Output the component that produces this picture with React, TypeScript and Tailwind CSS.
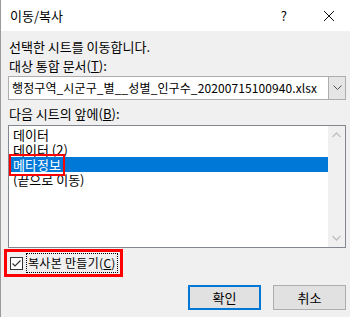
import React from "react";

const font = { fontFamily: "'Noto Sans CJK KR', 'Noto Sans', sans-serif" };

const sheets = ["데이터", "데이터 (2)", "메타정보", "(끝으로 이동)"];

export default function App() {
  return (
    <div
      className="w-[350px] h-[317px] bg-[#f0f0f0] border-l border-[#9a9a9a] text-[13px] text-black overflow-hidden flex flex-col"
      style={font}
    >
      {/* Title bar */}
      <div className="h-[31px] bg-white flex items-center pl-[9px] shrink-0">
        <span className="text-[13px] leading-none">이동/복사</span>
        <span className="ml-auto mr-[36px] text-[13px] leading-none">?</span>
        <svg width="12" height="12" viewBox="0 0 12 12" className="mr-[15px]">
          <path d="M1 1 L11 11 M11 1 L1 11" stroke="#111" strokeWidth="1" />
        </svg>
      </div>

      {/* Body */}
      <div className="flex flex-col px-[7px]">
        <div className="mt-[8px] h-[15px] leading-[15px] pl-[1px]">선택한 시트를 이동합니다.</div>
        <div className="mt-[4px] h-[15px] leading-[15px] pl-[1px]">
          대상 통합 문서(<span className="underline">T</span>):
        </div>

        {/* Combo box */}
        <div className="mt-[3px] h-[24px] w-[338px] flex border border-[#adadad] bg-white">
          <div className="flex-1 flex items-center pl-[3px] text-[12px] tracking-[0.1px]">
            행정구역_시군구_별__성별_인구수_20200715100940.xlsx
          </div>
          <div className="w-[17px] bg-[#e5e5e5] border-l border-[#adadad] flex items-center justify-center">
            <svg width="9" height="6" viewBox="0 0 9 6">
              <path d="M0.5 0.5 L4.5 4.5 L8.5 0.5" stroke="#555" strokeWidth="1" fill="none" />
            </svg>
          </div>
        </div>

        <div className="mt-[6px] h-[15px] leading-[15px] pl-[1px]">
          다음 시트의 앞에(<span className="underline">B</span>):
        </div>

        {/* List box */}
        <div className="mt-[4px] h-[123px] w-[338px] flex border border-[#828790] bg-white">
          <div className="flex-1 flex flex-col pt-[1px]">
            {sheets.map((s, i) =>
              i === 2 ? (
                <div key={s} className="h-[15px] leading-[15px] bg-[#0078d7] text-white pl-[4px] relative">
                  <span className="relative">
                    메타정보
                    <span className="absolute -left-[4px] -right-[4px] -top-[1px] -bottom-[2px] border-[2px] border-[#ff0000]" />
                  </span>
                </div>
              ) : (
                <div key={s} className="h-[15px] leading-[15px] pl-[4px]">
                  {s}
                </div>
              )
            )}
          </div>
          <div className="w-[17px] bg-[#f0f0f0] flex flex-col items-center justify-between py-[6px]">
            <svg width="9" height="6" viewBox="0 0 9 6">
              <path d="M0.5 5 L4.5 1 L8.5 5" stroke="#c2c2c2" strokeWidth="1.5" fill="none" />
            </svg>
            <svg width="9" height="6" viewBox="0 0 9 6">
              <path d="M0.5 1 L4.5 5 L8.5 1" stroke="#c2c2c2" strokeWidth="1.5" fill="none" />
            </svg>
          </div>
        </div>

        {/* Checkbox */}
        <div className="mt-[1px] -ml-[4px] w-[119px] h-[28px] border-[3px] border-[#ff0000] flex items-center pl-[3px]">
          <div className="w-[13px] h-[13px] border border-[#333] bg-white flex items-center justify-center shrink-0">
            <svg width="11" height="11" viewBox="0 0 11 11">
              <path d="M1.5 5.5 L4 8 L9.5 2.5" stroke="#333" strokeWidth="1.2" fill="none" />
            </svg>
          </div>
          <div className="ml-[3px] h-[20px] px-[1px] flex items-center border border-dotted border-black whitespace-nowrap text-[12px] tracking-[0.3px]">
            복사본 만들기(<span className="underline">C</span>)
          </div>
        </div>

        {/* Buttons */}
        <div className="mt-[8px] flex justify-end gap-[12px] w-[338px]">
          <button className="w-[73px] h-[25px] bg-[#e1e1e1] border-[2px] border-[#0078d7]">확인</button>
          <button className="w-[73px] h-[25px] bg-[#e1e1e1] border border-[#adadad]">취소</button>
        </div>
      </div>
    </div>
  );
}
